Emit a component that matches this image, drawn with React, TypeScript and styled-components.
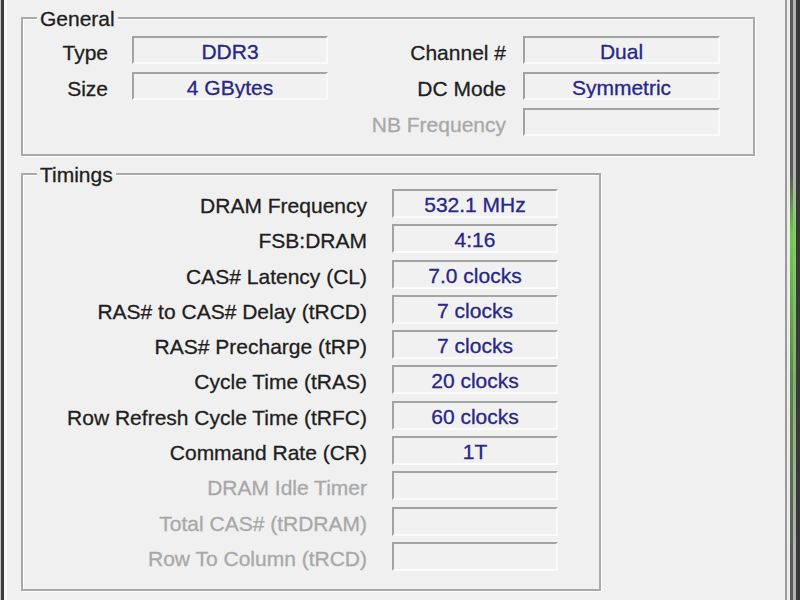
import React from "react";
import styled, { createGlobalStyle } from "styled-components";

const Global = createGlobalStyle`
  html, body { margin: 0; padding: 0; background: #f0f0f0; overflow: hidden; }
  * { box-sizing: border-box; }
`;

const Window = styled.div`
  display: flex;
  width: 800px;
  height: 600px;
  background: #f0f0f0;
  font-family: "Liberation Sans", Arial, sans-serif;
  font-size: 21px;
  -webkit-text-stroke: 0.3px currentColor;
`;

const LeftFrame = styled.div`
  flex: 0 0 7px;
  background: linear-gradient(
    to right,
    #c4c4c4 0 1px,
    #3c3c3c 1px 4px,
    #f8f8f8 4px 7px
  );
`;

const RightFrame = styled.div`
  flex: 0 0 15px;
  background:
    linear-gradient(
        to bottom,
        rgba(120, 210, 80, 0) 0,
        rgba(120, 210, 80, 0) 175px,
        rgba(120, 210, 80, 0.9) 235px,
        rgba(90, 170, 60, 0.55) 380px,
        rgba(90, 170, 60, 0) 560px
      )
      5px 0 / 6px 100% no-repeat,
    linear-gradient(
      to right,
      #9a9a9a 0 2px,
      #ececec 2px 5px,
      #5a5a5a 5px 8px,
      #b4b4b4 8px 11px,
      #383838 11px 15px
    );
`;

const Main = styled.div`
  flex: 1;
  display: flex;
  flex-direction: column;
  align-items: flex-start;
  gap: 17px;
  padding: 17px 30px 9px 14px;
`;

const GroupBox = styled.div<{ $width: number }>`
  position: relative;
  width: ${(p) => p.$width}px;
  border: 2px solid #a9a9a9;
  box-shadow: inset 1px 1px 0 #ffffff, 1px 1px 0 #ffffff;
`;

const Caption = styled.span`
  position: absolute;
  left: 14px;
  top: -12.5px;
  padding: 0 3px;
  line-height: 24px;
  background: #f0f0f0;
  color: #1e1e1e;
`;

const GeneralGrid = styled.div`
  display: grid;
  grid-template-columns: 109px 196px 195px 197px;
  grid-auto-rows: 28px;
  row-gap: 8px;
  padding: 17px 0 18px 0;
`;

const TimingsGrid = styled.div`
  display: grid;
  grid-template-columns: 369px 166px;
  grid-auto-rows: 29px;
  row-gap: 6.3px;
  padding: 14px 0 18px 0;
`;

const Label = styled.div<{ $gap: number; $disabled?: boolean }>`
  text-align: right;
  white-space: nowrap;
  padding-right: ${(p) => p.$gap}px;
  padding-top: 3px;
  line-height: 28px;
  color: ${(p) => (p.$disabled ? "#a8a8a8" : "#1e1e1e")};
`;

const Field = styled.div`
  border-top: 2px solid #a3a3a3;
  border-left: 2px solid #a3a3a3;
  border-bottom: 2px solid #fbfbfb;
  border-right: 2px solid #fbfbfb;
  background: #f1f1f1;
  color: #272784;
  text-align: center;
  line-height: 25px;
  padding-top: 1px;
  white-space: nowrap;
  overflow: hidden;
`;

const Spacer = styled.div``;

type Item = { label: string; value: string; disabled?: boolean };

const generalLeft: (Item | null)[] = [
  { label: "Type", value: "DDR3" },
  { label: "Size", value: "4 GBytes" },
  null,
];

const generalRight: Item[] = [
  { label: "Channel #", value: "Dual" },
  { label: "DC Mode", value: "Symmetric" },
  { label: "NB Frequency", value: "", disabled: true },
];

const timings: Item[] = [
  { label: "DRAM Frequency", value: "532.1 MHz" },
  { label: "FSB:DRAM", value: "4:16" },
  { label: "CAS# Latency (CL)", value: "7.0 clocks" },
  { label: "RAS# to CAS# Delay (tRCD)", value: "7 clocks" },
  { label: "RAS# Precharge (tRP)", value: "7 clocks" },
  { label: "Cycle Time (tRAS)", value: "20 clocks" },
  { label: "Row Refresh Cycle Time (tRFC)", value: "60 clocks" },
  { label: "Command Rate (CR)", value: "1T" },
  { label: "DRAM Idle Timer", value: "", disabled: true },
  { label: "Total CAS# (tRDRAM)", value: "", disabled: true },
  { label: "Row To Column (tRCD)", value: "", disabled: true },
];

export default function App() {
  return (
    <>
      <Global />
      <Window>
        <LeftFrame />
        <Main>
          <GroupBox $width={734}>
            <Caption>General</Caption>
            <GeneralGrid>
              {generalRight.map((r, i) => {
                const l = generalLeft[i];
                return (
                  <React.Fragment key={r.label}>
                    {l ? (
                      <>
                        <Label $gap={24}>{l.label}</Label>
                        <Field>{l.value}</Field>
                      </>
                    ) : (
                      <>
                        <Spacer />
                        <Spacer />
                      </>
                    )}
                    <Label $gap={17} $disabled={r.disabled}>
                      {r.label}
                    </Label>
                    <Field>{r.value}</Field>
                  </React.Fragment>
                );
              })}
            </GeneralGrid>
          </GroupBox>
          <GroupBox $width={580}>
            <Caption>Timings</Caption>
            <TimingsGrid>
              {timings.map((t) => (
                <React.Fragment key={t.label}>
                  <Label $gap={25} $disabled={t.disabled}>
                    {t.label}
                  </Label>
                  <Field>{t.value}</Field>
                </React.Fragment>
              ))}
            </TimingsGrid>
          </GroupBox>
        </Main>
        <RightFrame />
      </Window>
    </>
  );
}
